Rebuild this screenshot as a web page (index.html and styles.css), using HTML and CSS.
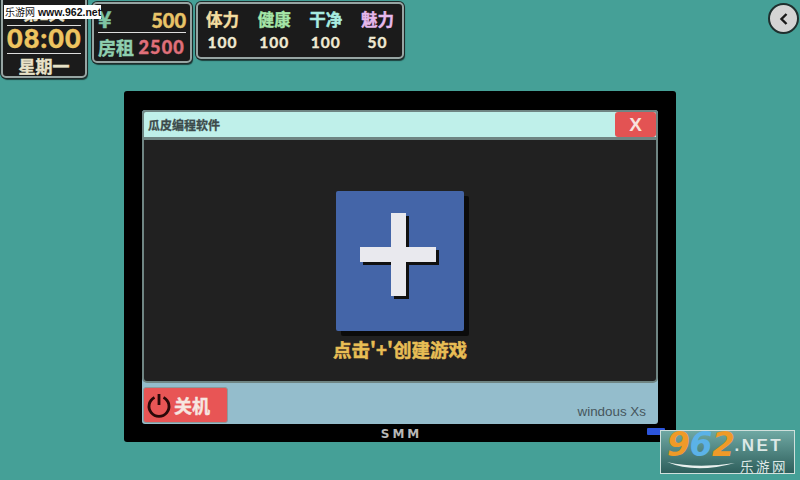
FILE: index.html
```html
<!DOCTYPE html>
<html lang="zh">
<head>
<meta charset="utf-8">
<title>瓜皮编程软件</title>
<link rel="stylesheet" href="styles.css">
</head>
<body>
<div class="screen">
  <header class="hud">
    <section class="panel clock">
      <div class="day">第1天</div>
      <div class="time">08:00</div>
      <div class="week">星期一</div>
    </section>
    <section class="panel money">
      <div class="row row-top"><span class="yen">¥</span><span class="cash">500</span></div>
      <div class="row"><span class="rent-label">房租</span><span class="rent">2500</span></div>
    </section>
    <section class="panel stats">
      <div class="stat"><span class="stat-name c-yellow">体力</span><span class="stat-val">100</span></div>
      <div class="stat"><span class="stat-name c-green">健康</span><span class="stat-val">100</span></div>
      <div class="stat"><span class="stat-name c-cyan">干净</span><span class="stat-val">100</span></div>
      <div class="stat"><span class="stat-name c-pink">魅力</span><span class="stat-val">50</span></div>
    </section>
    <button class="back" aria-label="返回">
      <svg width="14" height="14" viewBox="0 0 14 14"><path d="M9.5 2 L4.5 7 L9.5 12" fill="none" stroke="#1a1a1a" stroke-width="2.4"/></svg>
    </button>
  </header>

  <main class="monitor">
    <div class="window">
      <div class="titlebar">
        <span class="title">瓜皮编程软件</span>
        <span class="close">X</span>
      </div>
      <div class="content">
        <div class="add">
          <svg class="plus" width="80" height="87" viewBox="0 0 80 87">
            <path fill="#101010" d="M34 3h15v34h30v15H49v34H34V52H3V37h31z"/>
            <path fill="#e9e9ee" d="M31 0h15v34h30v15H46v34H31V49H0V34h31z"/>
          </svg>
        </div>
        <div class="hint">点击'+'创建游戏</div>
      </div>
      <div class="taskbar">
        <button class="power">
          <svg width="26" height="26" viewBox="0 0 26 26"><path d="M8.5 5.5 A10 10 0 1 0 17.5 5.5" fill="none" stroke="#2a0808" stroke-width="2.8"/><path d="M13 2v11" stroke="#2a0808" stroke-width="2.8"/></svg>
          <span>关机</span>
        </button>
        <span class="os">windous Xs</span>
      </div>
    </div>
    <div class="brand">SMM</div>
    <span class="led"></span>
  </main>

  <div class="wm-top"><span class="wm-cn">乐游网</span> www.962.net</div>
  <div class="wm-logo">
    <div class="wm-line1"><span class="w9">9</span><span class="w6">6</span><span class="w9">2</span><span class="wnet">.NET</span></div>
    <div class="wm-line2">
      <svg width="68" height="11" viewBox="0 0 68 11"><path d="M0 1 Q28 13 68 2 Q30 8 0 1z" fill="#e8f0ee"/></svg>
      <span>乐游网</span>
    </div>
  </div>
</div>
</body>
</html>
```
FILE: styles.css
```css
* { box-sizing: border-box; }
html, body { margin: 0; padding: 0; }
body { width: 800px; height: 480px; overflow: hidden; font-family: "Noto Sans CJK SC", sans-serif; }
.screen { position: relative; width: 800px; height: 480px; background: #45a097; overflow: hidden; }

.hud { height: 91px; display: flex; align-items: flex-start; padding-left: 1px; }
.panel {
  background: #1b1b1b;
  border: 2px solid #97a5a3;
  border-radius: 5px;
  box-shadow: 0 0 0 1px #1d2b2a, 1px 2px 1px rgba(0,0,0,.6);
  font-weight: 700;
  -webkit-text-stroke: .4px currentColor;
}
.clock { width: 86px; height: 88px; margin-top: -10px; display: flex; flex-direction: column; align-items: center; color: #e8e2c8; padding: 0 4px; }
.day { width: 74px; height: 26px; margin-top: 8px; font-size: 16px; line-height: 26px; text-align: center; border-bottom: 1.5px solid #ddd; flex: none; }
.time { width: 74px; height: 28px; font: 900 27px/24px "Lato", sans-serif; letter-spacing: 1px; color: #eec460; text-align: center; border-bottom: 1.5px solid #ddd; flex: none; }
.week { font-size: 17px; line-height: 23px; }

.money { width: 100px; height: 61px; margin: 2px 0 0 5px; padding: 3px 4px 0 4px; }
.row { display: flex; justify-content: space-between; align-items: center; height: 26px; }
.row-top { border-bottom: 1.5px solid #ddd; height: 26px; margin-bottom: 1px; }
.yen { font-size: 23px; color: #7fc4a4; line-height: 22px; align-self: flex-start; }
.cash { font: 900 20px/24px "Lato", sans-serif; color: #e8c468; }
.rent-label { font-size: 18px; color: #8fd0b0; line-height: 26px; }
.rent { font: 900 18px/26px "Lato", sans-serif; letter-spacing: 1.2px; color: #e0707a; margin-right: 1px; }

.stats { width: 208px; height: 57px; margin: 2px 0 0 4px; display: flex; justify-content: space-between; padding: 1px 3.5px 0; }
.stat { width: 42px; display: flex; flex-direction: column; align-items: center; }
.stat-name { font-size: 16.5px; line-height: 28px; }
.stat-val { font: 700 15.5px/18px "Lato", sans-serif; letter-spacing: 1px; color: #f0ead2; }
.c-yellow { color: #f2dca0; }
.c-green { color: #a5e6a8; }
.c-cyan { color: #a8ece0; }
.c-pink { color: #e6b8ec; }

.back { width: 31px; height: 31px; margin: 3px 1px 0 auto; padding: 0; border-radius: 50%; background: #d4d4d4; border: 2.5px solid #1f2f2e; display: flex; align-items: center; justify-content: center; }

.monitor { position: relative; width: 552px; height: 351px; margin-left: 124px; background: #000; border-radius: 3px; padding: 19px 18px 0; }
.window { width: 516px; height: 314px; background: #94bdcc; border-radius: 3px; display: flex; flex-direction: column; }
.titlebar { height: 29px; background: #bff0ea; border: 2px solid #6f8583; border-radius: 4px 4px 0 0; display: flex; align-items: center; justify-content: space-between; padding-left: 4px; }
.title { font-size: 12px; font-weight: 700; color: #3c4a4a; line-height: 1; -webkit-text-stroke: .3px currentColor; }
.close { width: 41px; height: 25px; background: #e35353; border-radius: 3px; color: #f8e0dc; font: 700 19px/25px "Liberation Sans", sans-serif; text-align: center; }
.content { height: 244px; background: #212121; border: 2px solid #6f8583; border-top-width: 1px; border-radius: 0 0 5px 5px; display: flex; flex-direction: column; align-items: center; padding-top: 51px; }
.add { width: 128px; height: 140px; background: #4465a8; border-radius: 2px; box-shadow: 5px 5px 0 #0b0b0b; display: flex; align-items: center; justify-content: center; }
.plus { margin-bottom: 10px; }
.hint { margin-top: 4px; font-size: 18.5px; line-height: 28px; font-weight: 700; color: #e8bd55; -webkit-text-stroke: .5px currentColor; }
.taskbar { flex: 1; display: flex; align-items: flex-end; justify-content: space-between; padding: 0 12px 0 1px; }
.power { width: 85px; height: 36px; padding: 0 0 0 2px; margin-bottom: 1px; background: #e85555; border: 1px solid #8c9a9a; border-radius: 3px; display: flex; align-items: center; gap: 2px; color: #f6e6e0; font: 700 18px/1 "Noto Sans CJK SC", sans-serif; -webkit-text-stroke: .4px currentColor; }
.os { font: 400 13.4px/14px "Liberation Sans", sans-serif; color: #46565c; margin-bottom: 5px; }
.brand { margin-top: 1px; padding-left: 3px; text-align: center; font: 700 12px/18px "DejaVu Sans", sans-serif; letter-spacing: 3px; color: #b8b8b8; }
.led { position: absolute; left: 523px; top: 337px; width: 18px; height: 7px; background: #2c55dc; border-radius: 1px; }

.wm-top { position: absolute; left: 4px; top: 5px; width: 97px; height: 14px; background: #fff; color: #111; font: 700 10.5px/14px "Liberation Sans", sans-serif; white-space: nowrap; padding-left: 1px; }
.wm-cn { font: 400 10px/14px "Noto Sans CJK SC", sans-serif; }
.wm-logo { position: absolute; left: 660px; top: 430px; width: 135px; height: 44px; border: 1px solid #cfe0dc; background: linear-gradient(#6fa8a3, #2e5f5c); padding: 0 0 0 6px; }
.wm-line1 { font: italic 700 33px/28px "DejaVu Sans", sans-serif; letter-spacing: -.5px; white-space: nowrap; height: 28px; }
.w9 { color: #ef9a28; }
.w6 { color: #5bb2e8; }
.wnet { font: 700 17px/17px "Liberation Sans", sans-serif; letter-spacing: 2.5px; color: #dce8e6; vertical-align: 5px; }
.wm-line2 { display: flex; align-items: center; justify-content: space-between; padding-right: 6px; font-size: 13.5px; line-height: 14px; letter-spacing: 2.5px; color: #dce8e6; }
```
